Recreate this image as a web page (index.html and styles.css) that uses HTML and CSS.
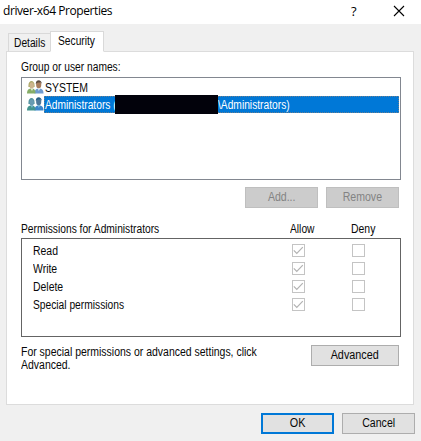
FILE: index.html
```html
<!DOCTYPE html>
<html lang="en">
<head>
<meta charset="utf-8">
<title>driver-x64 Properties</title>
<link rel="stylesheet" href="styles.css">
</head>
<body>
<svg class="defs" width="0" height="0">
  <symbol id="check" viewBox="0 0 13 13"><path d="M1.800 6.300l3 3.200 6-6.300" fill="none" stroke="#b2b2b2" stroke-width="1.2"/></symbol>
</svg>
<header class="titlebar">
  <h1 class="title">driver-x64 Properties</h1>
  <span class="help">?</span>
  <svg class="close" width="12" height="12" viewBox="0 0 12 12"><path d="M1 1l10 10M11 1L1 11" stroke="#000" stroke-width="1.1"/></svg>
</header>
<nav class="tabs">
  <div class="tab"><span class="t">Details</span></div>
  <div class="tab active"><span class="t">Security</span></div>
</nav>
<main class="panel">
  <div class="names-label"><span class="t">Group or user names:</span></div>
  <div class="users">
    <div class="user">
      <svg class="people" width="17" height="15" viewBox="0 0 17 15">
        <path d="M7.500 13.500c0-4 2-5 4.500-5s4.500 1 4.500 5z" fill="#6f9bd0"/><path d="M10.500 8l1.300 3L13.500 8z" fill="#e4eef2"/><ellipse cx="11.700" cy="4.800" rx="2.600" ry="3.500" fill="#a87c5c"/><path d="M8.800 4c-.3-5 6-5 6 0l-1-1.500h-3z" fill="#5a4c40"/>
        <path d="M0 13.500c0-4 2-5 4.500-5s4 1 4 5z" fill="#86ad68"/><path d="M1.500 7c-1-8 7-8 6 0z" fill="#a9a663"/><ellipse cx="4.700" cy="5.500" rx="2.200" ry="3.200" fill="#cdb58e"/><path d="M3.500 8.500L5 11l1.300-2.500z" fill="#e8edda"/>
      </svg>
      <div class="user-name"><span class="t t-m">SYSTEM</span></div>
    </div>
    <div class="user selected">
      <svg class="people" width="17" height="15" viewBox="0 0 17 15">
        <path d="M7.500 13.500c0-4 2-5 4.500-5s4.500 1 4.500 5z" fill="#3a87cd"/><path d="M10.500 8l1.300 3L13.500 8z" fill="#7bb9dd"/><ellipse cx="11.700" cy="4.800" rx="2.600" ry="3.500" fill="#4d7899"/><path d="M8.800 4c-.3-5 6-5 6 0l-1-1.500h-3z" fill="#265f85"/>
        <path d="M0 13.500c0-4 2-5 4.500-5s4 1 4 5z" fill="#43948f"/><path d="M1.500 7c-1-8 7-8 6 0z" fill="#4e8f9a"/><ellipse cx="4.700" cy="5.500" rx="2.200" ry="3.200" fill="#679bb3"/><path d="M3.500 8.500L5 11l1.300-2.500z" fill="#79b8d2"/>
      </svg>
      <div class="user-name"><div class="account"><span class="t">Administrators (</span></div><span class="redacted"></span><span class="t">\Administrators)</span></div>
    </div>
  </div>
  <div class="actions">
    <button class="btn disabled"><span class="t t-c">Add...</span></button>
    <button class="btn disabled"><span class="t t-c">Remove</span></button>
  </div>
  <div class="perm-head">
    <div><span class="t">Permissions for Administrators</span></div>
    <div><span class="t">Allow</span></div>
    <div><span class="t t-m">Deny</span></div>
  </div>
  <div class="perms">
    <div class="perm"><div class="perm-name"><span class="t t-m">Read</span></div><i class="box"><svg width="13" height="13"><use href="#check"/></svg></i><i class="box"></i></div>
    <div class="perm"><div class="perm-name"><span class="t t-m">Write</span></div><i class="box"><svg width="13" height="13"><use href="#check"/></svg></i><i class="box"></i></div>
    <div class="perm"><div class="perm-name"><span class="t t-m">Delete</span></div><i class="box"><svg width="13" height="13"><use href="#check"/></svg></i><i class="box"></i></div>
    <div class="perm"><div class="perm-name"><span class="t">Special permissions</span></div><i class="box"><svg width="13" height="13"><use href="#check"/></svg></i><i class="box"></i></div>
  </div>
  <div class="advanced-row">
    <p class="hint"><span class="t t-h">For special permissions or advanced settings, click<br>Advanced.</span></p>
    <button class="btn wide"><span class="t t-w">Advanced</span></button>
  </div>
</main>
<footer class="footer">
  <button class="btn default"><span class="t t-w">OK</span></button>
  <button class="btn"><span class="t t-c">Cancel</span></button>
</footer>
</body>
</html>
```
FILE: styles.css
```css
* { box-sizing: border-box; }
body {
  margin: 0;
  width: 421px;
  height: 441px;
  overflow: hidden;
  background: #f0f0f0;
  color: #080808;
  font: 12px/13px "Liberation Sans", Arial, sans-serif;
  white-space: nowrap;
}
.defs { position: absolute; }
/* Condensed dialog lettering */
.t { display: inline-block; transform: scaleX(.853); transform-origin: left; }
.t-m { transform: scaleX(.87); }
.t-h { transform: scaleX(.873); }
.t-c { transform: scaleX(.88); transform-origin: center; }
.t-w { transform: scaleX(.9); transform-origin: center; }
.titlebar {
  display: flex;
  height: 24px;
  background: #fff;
  padding: 0 16px 0 3px;
}
.title {
  margin: 0;
  flex: 1;
  font: 12px/22px "Open Sans", sans-serif;
  letter-spacing: -0.42px;
  color: #000;
}
.help { font: 500 13px/23px "Open Sans", sans-serif; width: 42px; color: #000; }
.close { margin-top: 5px; }
.tabs { display: flex; align-items: flex-end; height: 28px; padding-left: 8px; margin-bottom: -1px; position: relative; }
.tab {
  width: 43px;
  height: 19px;
  border: 1px solid #d9d9d9;
  border-bottom-color: #dcdcdc;
  padding: 3px 0 0 5px;
}
.tab.active {
  width: 54px;
  height: 21px;
  margin-left: -1px;
  padding: 3px 0 0 7px;
  background: #fff;
  border-bottom-color: #fff;
}
.panel {
  width: 408px;
  height: 354px;
  margin-left: 6px;
  padding: 9px 12px 0 14px;
  background: #fff;
  border: 1px solid #dcdcdc;
}
.names-label { height: 13px; }
.users {
  width: 380px;
  height: 103px;
  margin-top: 3px;
  border: 1px solid #828790;
  padding: 1px 1px 0 5px;
}
.user { display: flex; height: 17px; align-items: center; }
.people { flex: none; }
.user-name { flex: 1; padding-left: 1px; height: 17px; line-height: 18px; display: flex; }
.selected .user-name { background: #0078d7; color: #fff; outline: 1px dotted #6b7f8f; outline-offset: -1px; }
.account { width: 70px; }
.redacted { width: 103px; height: 19px; margin-top: -1px; background: #02020b; position: relative; }
.actions { display: flex; gap: 8px; margin: 7px 0 0 224px; }
.btn {
  width: 73px;
  height: 21px;
  padding: 0;
  font: inherit;
  color: #080808;
  background: #e1e1e1;
  border: 1px solid #adadad;
  border-radius: 0;
}
.disabled { background: #ccc; border-color: #bfbfbf; color: #838383; }
.wide { width: 88px; }
.default { border: 2px solid #0078d7; }
.perm-head { display: grid; grid-template-columns: 269px 61px 50px; margin-top: 15px; height: 15px; }
.perms { width: 380px; height: 99px; border: 1px solid #646464; padding: 5px 0 0 11px; }
.perm { display: grid; grid-template-columns: 259px 60px 13px; height: 18px; align-items: start; }
.perm-name { padding-top: 1px; }
.box { width: 13px; height: 13px; border: 1px solid #c4c4c4; }
.box svg { display: block; margin: -1px; }
.advanced-row { display: flex; margin-top: 8px; }
.hint { margin: 0; padding-top: 1px; width: 290px; }
.footer { display: flex; gap: 8px; margin: 8px 0 0 261px; }
```
